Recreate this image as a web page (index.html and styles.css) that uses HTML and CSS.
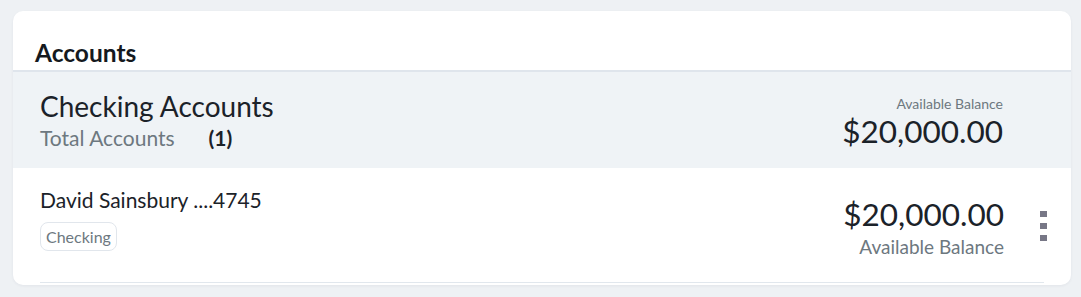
FILE: index.html
```html
<!DOCTYPE html>
<html lang="en">
<head>
<meta charset="utf-8">
<title>Accounts</title>
<link rel="stylesheet" href="styles.css">
</head>
<body>
<section class="card">
  <header class="card-header">
    <h2 class="card-title">Accounts</h2>
  </header>
  <div class="group">
    <div class="group-info">
      <div class="group-name">Checking Accounts</div>
      <div class="group-count"><span class="count-label">Total Accounts</span><span class="count-num">(1)</span></div>
    </div>
    <div class="group-balance">
      <div class="balance-label">Available Balance</div>
      <div class="balance-amount">$20,000.00</div>
    </div>
  </div>
  <div class="account">
    <div class="account-info">
      <div class="account-name">David Sainsbury ....4745</div>
      <span class="badge">Checking</span>
    </div>
    <div class="account-balance">
      <div class="account-amount">$20,000.00</div>
      <div class="account-label">Available Balance</div>
    </div>
    <button class="kebab" aria-label="More options">
      <span class="dot"></span><span class="dot"></span><span class="dot"></span>
    </button>
  </div>
</section>
</body>
</html>
```

FILE: styles.css
```css
html, body {
  margin: 0;
  padding: 0;
}
body {
  background: #eef1f4;
  font-family: "Lato", "Liberation Sans", sans-serif;
  color: #1b2229;
  padding: 11px 10px 12px 13px;
  height: 297px;
  box-sizing: border-box;
}
.card {
  background: #ffffff;
  border-radius: 10px;
  height: 274px;
  box-shadow: 0 1px 3px rgba(30, 40, 60, 0.06);
  overflow: hidden;
  display: flex;
  flex-direction: column;
}
.card-header {
  height: 59px;
  border-bottom: 2px solid #dfe5ec;
  display: flex;
  align-items: flex-end;
  padding: 0 22px;
}
.card-title {
  margin: 0 0 3px;
  font-size: 24.5px;
  font-weight: 700;
  line-height: 28px;
  color: #15191e;
}
.group {
  background: #eff3f6;
  height: 96px;
  display: flex;
  justify-content: space-between;
  align-items: flex-start;
  padding: 0 68px 0 27px;
  box-sizing: border-box;
}
.group-info {
  padding-top: 18px;
}
.group-name {
  font-size: 28px;
  line-height: 33px;
  color: #1b2229;
}
.group-count {
  font-size: 21px;
  line-height: 26px;
  margin-top: 2px;
  display: flex;
  gap: 34px;
}
.count-label {
  color: #6d787f;
}
.count-num {
  color: #1b2229;
  font-weight: 700;
}
.group-balance {
  text-align: right;
  padding-top: 24px;
}
.balance-label {
  font-size: 14px;
  line-height: 16px;
  color: #6d787f;
}
.balance-amount {
  font-size: 31.5px;
  line-height: 38px;
  color: #1b2229;
}
.account {
  height: 115px;
  margin: 0 27px;
  border-bottom: 1px solid #e1e7ed;
  display: flex;
  align-items: flex-start;
  box-sizing: border-box;
}
.account-info {
  flex: 1;
  padding-top: 18px;
}
.account-name {
  font-size: 21px;
  line-height: 28px;
  color: #1b2229;
}
.badge {
  display: inline-block;
  margin-top: 8px;
  border: 1px solid #e1e6ec;
  border-radius: 8px;
  padding: 3px 5px;
  font-size: 16px;
  line-height: 21px;
  color: #6d787f;
}
.account-balance {
  text-align: right;
  padding-top: 27px;
}
.account-amount {
  font-size: 31.5px;
  line-height: 38px;
  color: #1b2229;
}
.account-label {
  font-size: 19px;
  line-height: 22px;
  margin-top: 3px;
  color: #6d787f;
}
.kebab {
  margin: 43px -3px 0 36px;
  padding: 0;
  border: 0;
  background: none;
  display: flex;
  flex-direction: column;
  gap: 6px;
  cursor: pointer;
}
.dot {
  width: 7px;
  height: 6px;
  background: #777786;
  display: block;
}
```
